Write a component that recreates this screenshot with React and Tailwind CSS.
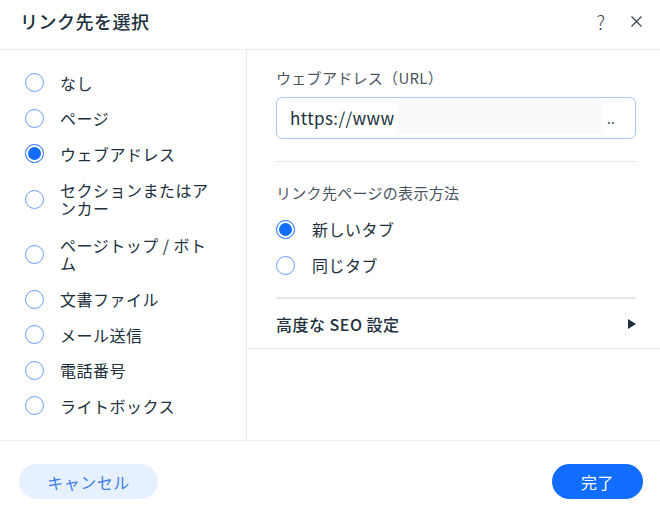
import { useState } from 'react';

const linkTypes = [
  'なし',
  'ページ',
  'ウェブアドレス',
  'セクションまたはアンカー',
  'ページトップ / ボトム',
  '文書ファイル',
  'メール送信',
  '電話番号',
  'ライトボックス',
];

function Radio({ checked }) {
  return checked ? (
    <span className="shrink-0 flex items-center justify-center w-[19px] h-[19px] rounded-full border border-[#116dff] bg-white">
      <span className="w-[13px] h-[13px] rounded-full bg-[#116dff]" />
    </span>
  ) : (
    <span className="shrink-0 w-[19px] h-[19px] rounded-full border-[1.5px] border-[#6aa0f6] bg-white" />
  );
}

export default function App() {
  const [type, setType] = useState(2);
  const [target, setTarget] = useState(0);

  return (
    <div
      className="w-[660px] h-[516px] bg-white flex flex-col text-[#20303c] overflow-hidden"
      style={{ fontFamily: '"Noto Sans CJK JP", "Noto Sans", sans-serif' }}
    >
      {/* Header */}
      <header className="h-[50px] shrink-0 flex items-center pl-[20px] pr-[17px] border-b border-[#e6e8ec]">
        <h1 className="flex-1 text-[18px] font-medium tracking-[0.5px] -mt-[6px]">リンク先を選択</h1>
        <span className="text-[19px] font-light text-[#3a4550] mr-[25px] leading-none -mt-[6px]">?</span>
        <svg width="13" height="13" viewBox="0 0 13 13" className="text-[#3a4550] -mt-[6px]">
          <path d="M1.5 1.5 L11.5 11.5 M11.5 1.5 L1.5 11.5" stroke="currentColor" strokeWidth="1.3" fill="none" />
        </svg>
      </header>

      {/* Body */}
      <div className="h-[391px] shrink-0 flex border-b border-[#eceef1]">
        <div className="w-[247px] shrink-0 border-r border-[#e6e8ec] pt-[15px] pl-[25px] flex flex-col">
          {linkTypes.map((label, i) => {
            const twoLine = i === 3 || i === 4;
            return (
              <button
                key={label}
                onClick={() => setType(i)}
                className={`flex items-center gap-[16px] text-left ${twoLine ? 'h-[55px]' : 'h-[35.5px]'}`}
              >
                <Radio checked={type === i} />
                <span className="w-[155px] text-[16px] leading-[18px] tracking-[0.5px]">{label}</span>
              </button>
            );
          })}
        </div>

        <div className="flex-1 flex flex-col">
          <div className="pl-[29px] pr-[24px] pt-[17px]">
            <div className="text-[15px] leading-[22px] text-[#4a5560] tracking-[0.3px]">ウェブアドレス（URL）</div>
            <div className="mt-[8px] h-[42px] rounded-[6px] border border-[#a8c8f6] flex items-center pl-[13px] pr-[20px]">
              <span className="text-[17px] tracking-[0.4px]">https://www</span>
              <span className="flex-1 h-[32px] bg-[#f9fafb] ml-[2px] mr-[4px]" />
              <span className="text-[15px] text-[#4a5560]">..</span>
            </div>
            <div className="mt-[22px] border-t border-[#e6e8ec]" />
            <div className="mt-[20px] text-[15px] leading-[22px] text-[#4a5560] tracking-[0.3px]">リンク先ページの表示方法</div>
            <div className="mt-[7px] flex flex-col">
              {['新しいタブ', '同じタブ'].map((label, i) => (
                <button key={label} onClick={() => setTarget(i)} className="h-[36px] flex items-center gap-[17px] text-left">
                  <Radio checked={target === i} />
                  <span className="text-[16px] tracking-[0.5px]">{label}</span>
                </button>
              ))}
            </div>
            <div className="mt-[14px] border-t-2 border-[#e4e6ea]" />
          </div>
          <div className="h-[50px] pl-[29px] pr-[24px] flex items-center border-b border-[#e4e6ea]">
            <span className="flex-1 text-[16px] font-medium tracking-[0.5px]">高度な SEO 設定</span>
            <svg width="8" height="10" viewBox="0 0 8 10">
              <path d="M0 0 L8 5 L0 10 Z" fill="#20303c" />
            </svg>
          </div>
        </div>
      </div>

      {/* Footer */}
      <footer className="flex-1 flex items-center justify-between pl-[19px] pr-[17px] pt-[6px]">
        <button className="w-[139px] h-[35px] rounded-full bg-[#e7f0ff] text-[#3b7de8] text-[16px] tracking-[0.5px]">
          キャンセル
        </button>
        <button className="w-[91px] h-[35px] rounded-full bg-[#116dff] text-white text-[16px] tracking-[0.5px]">
          完了
        </button>
      </footer>
    </div>
  );
}
